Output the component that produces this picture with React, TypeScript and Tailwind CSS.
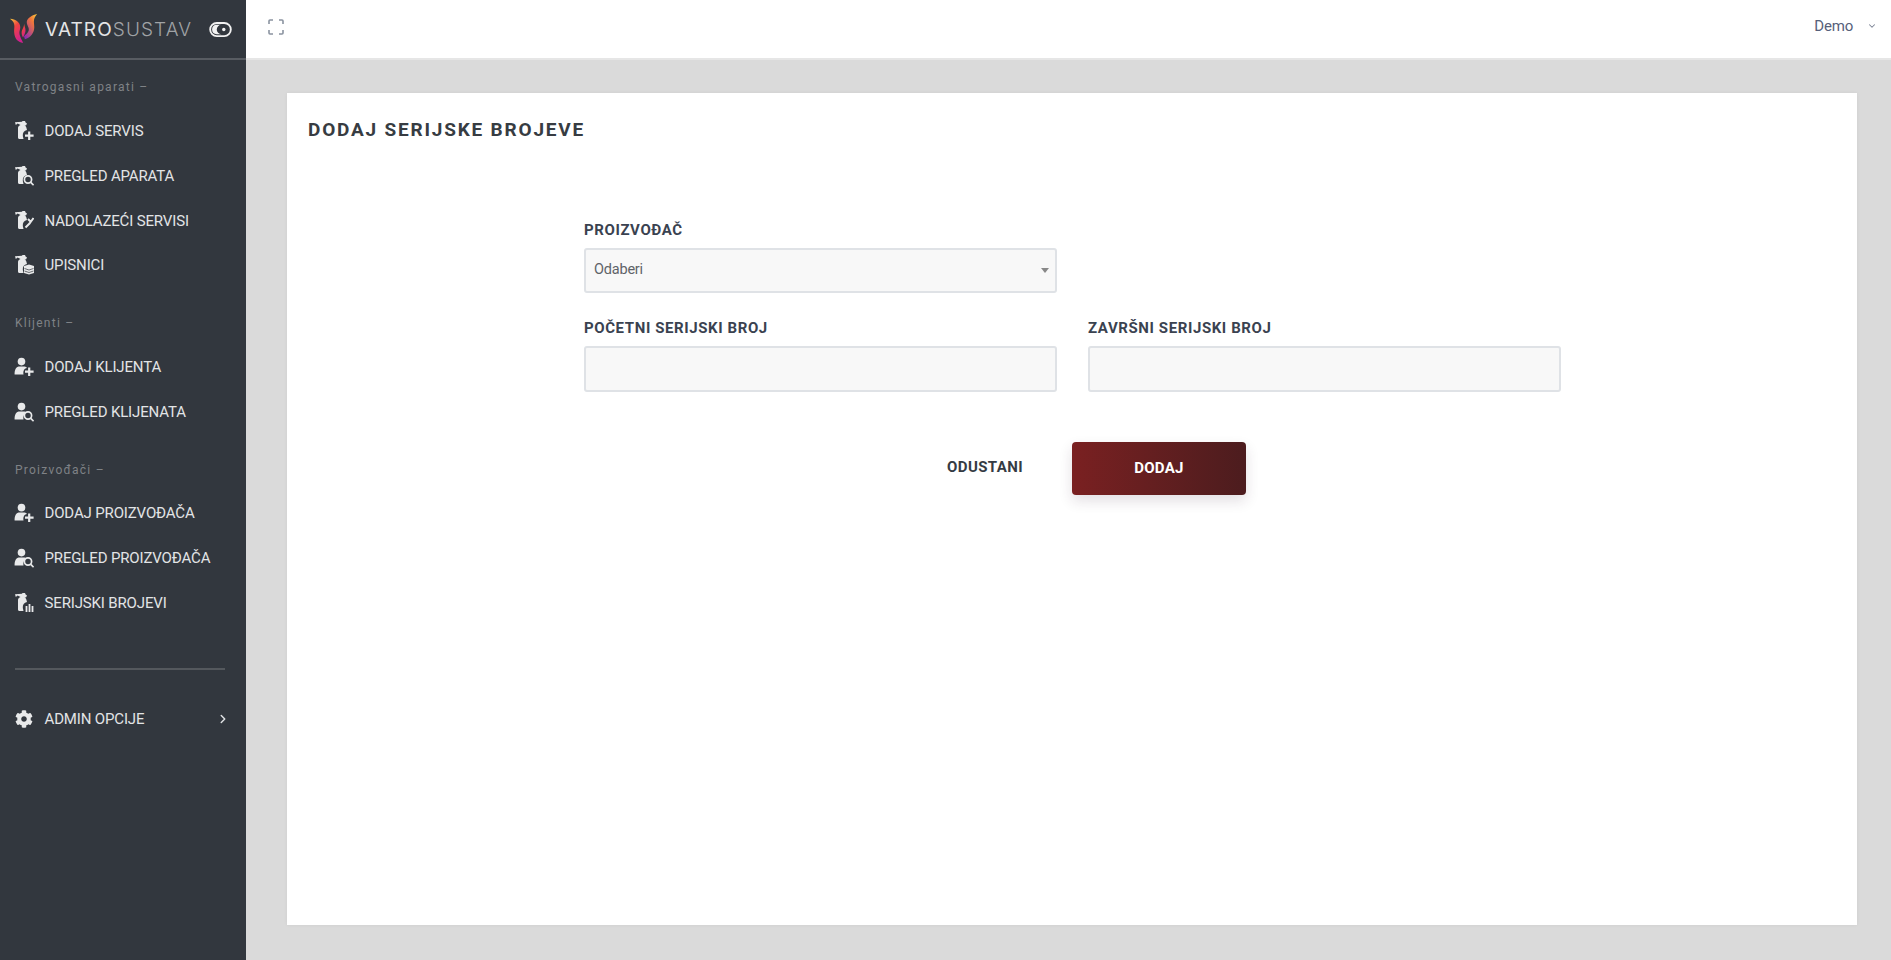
import React from "react";
import { ChevronDown, ChevronRight } from "lucide-react";
import { FaCog } from "react-icons/fa";

const Ext = () => (
  <path
    fill="currentColor"
    d="M1 1.2 L8 .8 L8.5 0 L11 0 L11.6 1.6 L13 2.6 L12 4.4 L10.6 4 C11.8 5 12.4 6.2 12.6 7.5 L13 9 C10 9.5 8.5 12 8.8 15 L9.5 18 L5.5 18 C4.6 18 4 17.3 4 16.5 L4 7 C4 5.6 5 4.5 6.5 4 L3.6 2.6 L1.8 4 Z"
  />
);

const Person = () => (
  <g fill="currentColor">
    <circle cx="7.5" cy="4.6" r="3.8" />
    <path d="M.6 17.5 C.6 15 .8 10.6 4.6 9.6 L10.6 9.6 C11.8 9.9 12.6 10.4 13 11 C10 11.5 9 14 9.5 17.5 Z" />
  </g>
);

const Plus = () => (
  <path d="M15.2 10.5 V19 M11 14.7 H19.6" stroke="currentColor" strokeWidth="2.2" fill="none" />
);
const Lens = () => (
  <g stroke="currentColor" strokeWidth="1.7" fill="#32373e">
    <circle cx="14" cy="13.5" r="3.6" />
    <path d="M16.8 16.3 L19.6 19.2" fill="none" />
  </g>
);
const Wrench = () => (
  <path d="M19.5 7 L17 10.5 L15.5 12.5 L11.5 16.5 M14 8 L17 11" stroke="currentColor" strokeWidth="2" fill="none" />
);
const Book = () => (
  <g fill="currentColor">
    <path d="M10 11 L15 9.5 L20 11 V18 L15 19.5 L10 18 Z" />
    <path d="M10.5 13.5 L15 15 L19.5 13.5 M10.5 16 L15 17.5 L19.5 16" stroke="#32373e" strokeWidth="0.7" fill="none" />
  </g>
);
const Bars = () => (
  <path d="M12.5 13 V19 M15.5 11 V19 M18.5 13 V19" stroke="currentColor" strokeWidth="1.8" fill="none" />
);

function Ico({ children }: { children: React.ReactNode }) {
  return (
    <svg viewBox="0 0 20 20" className="w-[20px] h-[20px] text-[#e8e9ea] shrink-0">
      {children}
    </svg>
  );
}

function Item({ icon, label, trailing, h = "h-[45px]" }: { icon: React.ReactNode; label: string; trailing?: React.ReactNode; h?: string }) {
  return (
    <div className={`flex items-center pl-[14px] pr-[18px] ${h}`}>
      {icon}
      <span className="ml-[10.5px] text-[15px] leading-[20px] tracking-[-0.15px] text-[#e2e4e6]">{label}</span>
      {trailing}
    </div>
  );
}

function Heading({ children, className = "" }: { children: React.ReactNode; className?: string }) {
  return (
    <div className={`pl-[15px] text-[12px] leading-[16px] tracking-[1.25px] text-[#7f8286] ${className}`}>{children} –</div>
  );
}

function Field({ label, select }: { label: string; select?: boolean }) {
  return (
    <div className="w-[473px]">
      <div className="text-[15px] leading-[20px] font-bold tracking-[0.6px] text-[#3a4250]">{label}</div>
      {select ? (
        <div className="mt-[8px] h-[45px] rounded-[3px] border-2 border-[#dfe2e6] bg-[#f8f8f8] flex items-center pl-[8px] pr-[6px] justify-between">
          <span className="text-[14.5px] text-[#5f6368] tracking-[-0.2px] -mt-[1px]">Odaberi</span>
          <span className="w-0 h-0 border-l-[4px] border-r-[4px] border-t-[5px] border-l-transparent border-r-transparent border-t-[#888888]" />
        </div>
      ) : (
        <div className="mt-[8px] h-[46px] rounded-[3px] border-2 border-[#dfe2e6] bg-[#f8f8f8]" />
      )}
    </div>
  );
}

export default function App() {
  return (
    <div className="flex h-[960px] w-[1891px] overflow-hidden bg-[#dadada]" style={{ fontFamily: "Roboto, sans-serif" }}>
      <aside className="w-[246px] shrink-0 bg-[#32373e] flex flex-col">
        <div className="h-[60px] border-b-2 border-[#585c62] flex items-center pl-[10px] shrink-0">
          <svg viewBox="0 0 30 32" className="w-[28px] h-[30px] shrink-0">
            <defs>
              <linearGradient id="fl" x1="0" y1="0" x2="0.5" y2="1">
                <stop offset="0" stopColor="#f7d23a" />
                <stop offset="0.4" stopColor="#f0453f" />
                <stop offset="1" stopColor="#d0208e" />
              </linearGradient>
              <linearGradient id="fr" x1="1" y1="0" x2="0.2" y2="1">
                <stop offset="0" stopColor="#f9cf3c" />
                <stop offset="0.35" stopColor="#f2783a" />
                <stop offset="1" stopColor="#8e2bb0" />
              </linearGradient>
            </defs>
            <path d="M0 5 C6 5 11 9 11 14 C11 17 9 19 11 24 C11.5 26 13 28 14 31 C8 30 5 26 4.5 20 C4 14 7 10 0 5 Z" fill="url(#fl)" />
            <path d="M29 0 C24 1 19 4 18 8 C17.5 12 21 14 20 18 C19 21 16.5 22 15 24 L16 27 C22 25 26 20 26 14 C26 9 24 6 29 0 Z" fill="url(#fr)" />
            <path d="M15 10 C15.5 14 12.5 16 12.5 20 C12.5 22 13 23 14 25 C16 21 17 19 16.5 16 C16 14 15.5 12 15 10 Z" fill="url(#fl)" />
          </svg>
          <span className="ml-[7px] text-[19px] tracking-[1.1px] leading-none whitespace-nowrap" style={{ fontFamily: "Inter, sans-serif" }}>
            <span className="text-[#e4e5e6] font-normal">VATRO</span>
            <span className="text-[#a0a3a6] font-light">SUSTAV</span>
          </span>
          <svg viewBox="0 0 24 16" className="ml-auto mr-[14px] w-[23px] h-[15px] shrink-0">
            <rect x="1" y="1" width="22" height="14" rx="7" fill="#32373e" stroke="#f2f2f2" strokeWidth="2" />
            <path d="M3 8 C3 5 5 3 8 3 L13 3 A5 5 0 0 0 13 13 L8 13 C5 13 3 11 3 8 Z" fill="#f2f2f2" />
            <circle cx="15.5" cy="8" r="1.8" fill="#f2f2f2" />
          </svg>
        </div>

        <Heading className="mt-[19px] mb-[14px]">Vatrogasni aparati</Heading>
        <Item h="h-[44.7px]" label="DODAJ SERVIS" icon={<Ico><Ext /><Plus /></Ico>} />
        <Item h="h-[44.7px]" label="PREGLED APARATA" icon={<Ico><Ext /><Lens /></Ico>} />
        <Item h="h-[44.7px]" label="NADOLAZEĆI SERVISI" icon={<Ico><Ext /><Wrench /></Ico>} />
        <Item h="h-[44.7px]" label="UPISNICI" icon={<Ico><Ext /><Book /></Ico>} />

        <Heading className="mt-[27px] mb-[13px]">Klijenti</Heading>
        <Item h="h-[46px]" label="DODAJ KLIJENTA" icon={<Ico><Person /><Plus /></Ico>} />
        <Item label="PREGLED KLIJENATA" icon={<Ico><Person /><Lens /></Ico>} />

        <Heading className="mt-[27px] mb-[13px]">Proizvođači</Heading>
        <Item label="DODAJ PROIZVOĐAČA" icon={<Ico><Person /><Plus /></Ico>} />
        <Item label="PREGLED PROIZVOĐAČA" icon={<Ico><Person /><Lens /></Ico>} />
        <Item label="SERIJSKI BROJEVI" icon={<Ico><Ext /><Bars /></Ico>} />

        <div className="ml-[15px] w-[210px] mt-[42px] mb-[27px] h-[2px] bg-[#54585d]" />
        <Item
          label="ADMIN OPCIJE"
          icon={<span className="w-[20px] flex justify-center"><FaCog className="text-[#e8e9ea]" size={18} /></span>}
          trailing={<ChevronRight className="ml-auto text-[#dfe1e3] -mr-[2px]" size={14} strokeWidth={2.5} />}
        />
      </aside>

      <div className="flex-1 flex flex-col min-w-0">
        <header className="h-[60px] shrink-0 bg-white border-b-2 border-[#e6e6e6] flex items-center pl-[22px] pr-[14px]">
          <svg viewBox="0 0 16 16" className="w-[16px] h-[16px] -mt-[5px] text-[#8a93a0]" fill="none" stroke="currentColor" strokeWidth="1.6">
            <path d="M1 5 V2 Q1 1 2 1 H5 M11 1 H14 Q15 1 15 2 V5 M15 11 V14 Q15 15 14 15 H11 M5 15 H2 Q1 15 1 14 V11" />
          </svg>
          <div className="ml-auto flex items-center -mt-[6px]">
            <span className="text-[15px] text-[#56607a] tracking-[-0.2px]">Demo</span>
            <ChevronDown className="ml-[14px] text-[#7a8294]" size={10} strokeWidth={2.5} />
          </div>
        </header>
        <main className="flex-1 ml-[41px] mr-[34px] mt-[33px] mb-[35px] bg-white shadow-[0_0_4px_rgba(0,0,0,0.05)] pt-[24px] pl-[21px]">
          <h1 className="text-[19px] leading-[26px] font-bold tracking-[1.8px] text-[#373c42]">DODAJ SERIJSKE BROJEVE</h1>
          <div className="ml-[276px] mt-[77px]">
            <Field label="PROIZVOĐAČ" select />
            <div className="flex gap-[31px] mt-[25px]">
              <Field label="POČETNI SERIJSKI BROJ" />
              <Field label="ZAVRŠNI SERIJSKI BROJ" />
            </div>
            <div className="flex items-center mt-[50px] ml-[363px]">
              <span className="text-[15px] font-bold tracking-[0.4px] text-[#353b44] -mt-[2px]">ODUSTANI</span>
              <button className="ml-[49px] w-[174px] h-[53px] rounded-[4px] bg-gradient-to-r from-[#7a2021] to-[#4c1c1e] text-white text-[15px] font-bold tracking-[0.3px] shadow-[0_6px_14px_rgba(60,30,60,0.14)]">
                DODAJ
              </button>
            </div>
          </div>
        </main>
      </div>
    </div>
  );
}
